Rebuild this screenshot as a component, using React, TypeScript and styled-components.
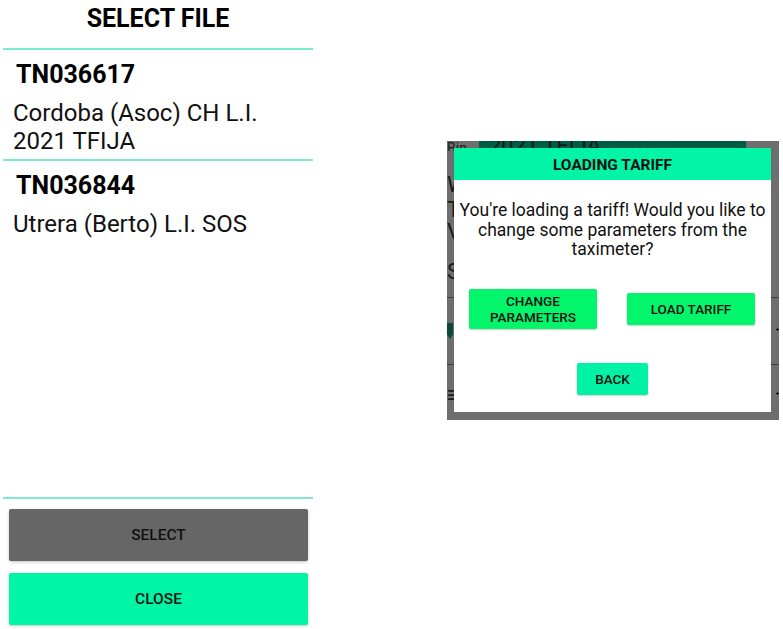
import styled, { createGlobalStyle } from "styled-components";

const GlobalStyle = createGlobalStyle`
  html, body {
    margin: 0;
    padding: 0;
    background: #ffffff;
    font-family: Roboto, "Liberation Sans", Arial, sans-serif;
  }
`;

interface TariffFile {
  code: string;
  name: string;
}

const files: TariffFile[] = [
  { code: "TN036617", name: "Cordoba (Asoc) CH L.I. 2021 TFIJA" },
  { code: "TN036844", name: "Utrera (Berto) L.I. SOS" },
];

const App = () => {
  return (
    <>
      <GlobalStyle />
      <Page>
        <FilePanel>
          <Title>SELECT FILE</Title>
          <Divider />
          <FileList>
            {files.map((file, i) => (
              <div key={file.code}>
                <FileItem>
                  <FileCode>{file.code}</FileCode>
                  <FileName>{file.name}</FileName>
                </FileItem>
                {i === 0 && <Divider />}
              </div>
            ))}
          </FileList>
          <Divider />
          <ActionBar>
            <WideButton $variant="grey">SELECT</WideButton>
            <WideButton $variant="green">CLOSE</WideButton>
          </ActionBar>
        </FilePanel>

        <PreviewArea>
          <Backdrop>
            <UnderScreen>
              <UnderTop>
                <UnderLabel>Bin</UnderLabel>
                <UnderBar>2021 TFIJA</UnderBar>
              </UnderTop>
              <UnderLetter $top={24}>W</UnderLetter>
              <UnderLetter $top={5}>T</UnderLetter>
              <UnderLetter $top={2}>V</UnderLetter>
              <UnderLetter $top={20}>S</UnderLetter>
              <UnderRow $height={66} $top={15}>
                <Chevron />
                <Dots />
              </UnderRow>
              <UnderRow $height={60} $top={0}>
                <Burger>≡</Burger>
                <Dots />
              </UnderRow>
            </UnderScreen>

            <Dialog>
              <DialogHeader>LOADING TARIFF</DialogHeader>
              <DialogText>
                You're loading a tariff! Would you like to change some
                parameters from the taximeter?
              </DialogText>
              <DialogButtons>
                <DialogButton $tall>
                  CHANGE
                  <br />
                  PARAMETERS
                </DialogButton>
                <DialogButton>LOAD TARIFF</DialogButton>
              </DialogButtons>
              <BackRow>
                <BackButton>BACK</BackButton>
              </BackRow>
            </Dialog>
          </Backdrop>
        </PreviewArea>
      </Page>
    </>
  );
};

export default App;

const Page = styled.div`
  display: flex;
  width: 783px;
  height: 629px;
  overflow: hidden;
`;

const FilePanel = styled.div`
  width: 316px;
  height: 629px;
  display: flex;
  flex-direction: column;
  padding: 0 3px;
  box-sizing: border-box;
`;

const Title = styled.div`
  height: 48px;
  line-height: 37px;
  text-align: center;
  font-size: 25px;
  font-weight: 700;
  color: #000;
`;

const Divider = styled.div`
  height: 2px;
  background: #7eeacf;
`;

const FileList = styled.div`
  flex: 1;
`;

const FileItem = styled.div`
  padding: 10px 0 4px 10px;
`;

const FileCode = styled.div`
  font-size: 25px;
  font-weight: 700;
  line-height: 30px;
  padding-left: 3px;
  margin-bottom: 9px;
  color: #000;
`;

const FileName = styled.div`
  font-size: 24px;
  line-height: 28px;
  color: #111;
  width: 270px;
`;

const ActionBar = styled.div`
  display: flex;
  flex-direction: column;
  gap: 12px;
  padding: 10px 5px 4px 6px;
`;

const WideButton = styled.div<{ $variant: "grey" | "green" }>`
  height: 52px;
  display: flex;
  align-items: center;
  justify-content: center;
  border-radius: 2px;
  font-size: 15.5px;
  font-weight: 500;
  color: #111;
  background: ${({ $variant }) => ($variant === "grey" ? "#666666" : "#00f5a6")};
  box-shadow: 0 1px 3px rgba(0, 0, 0, 0.25);
`;

const PreviewArea = styled.div`
  padding: 141px 0 0 131px;
`;

const Backdrop = styled.div`
  position: relative;
  width: 332px;
  height: 279px;
  background: #6e6e6e;
  overflow: hidden;
`;

const UnderScreen = styled.div`
  display: flex;
  flex-direction: column;
  color: #1a1a1a;
`;

const UnderTop = styled.div`
  display: flex;
  height: 10px;
  overflow: hidden;
  align-items: flex-end;
`;

const UnderLabel = styled.div`
  width: 32px;
  font-size: 14px;
  line-height: 14px;
  margin-bottom: -4px;
`;

const UnderBar = styled.div`
  width: 267px;
  height: 10px;
  background: #005c42;
  font-size: 22px;
  line-height: 10px;
  padding-left: 10px;
  box-sizing: border-box;
  color: #1a1a1a;
  overflow: hidden;
`;

const UnderLetter = styled.div<{ $top: number }>`
  font-size: 22px;
  line-height: 20px;
  margin-top: ${({ $top }) => $top}px;
`;

const UnderRow = styled.div<{ $height: number; $top: number }>`
  height: ${({ $height }) => $height}px;
  margin-top: ${({ $top }) => $top}px;
  border-top: 1px solid #3b3b3b;
  display: flex;
  align-items: center;
  justify-content: space-between;
`;

const Chevron = styled.div`
  width: 6px;
  height: 16px;
  background: #0b4a39;
  clip-path: polygon(0 0, 100% 0, 100% 70%, 50% 100%, 0 70%);
`;

const Burger = styled.div`
  font-size: 24px;
  color: #1a1a1a;
`;

const Dots = styled.div`
  width: 3px;
  height: 18px;
  background: radial-gradient(circle, #111 1.2px, transparent 1.4px) 0 0 / 3px 15px;
`;

const Dialog = styled.div`
  position: absolute;
  left: 7px;
  top: 7px;
  width: 317px;
  height: 264px;
  background: #ffffff;
  display: flex;
  flex-direction: column;
`;

const DialogHeader = styled.div`
  height: 32px;
  background: #02f5a6;
  display: flex;
  align-items: center;
  justify-content: center;
  padding-top: 1px;
  box-sizing: border-box;
  font-size: 15.5px;
  font-weight: 700;
  color: #111;
`;

const DialogText = styled.div`
  padding: 21px 2px 0;
  font-size: 17.5px;
  line-height: 19.5px;
  text-align: center;
  color: #111;
`;

const DialogButtons = styled.div`
  display: flex;
  align-items: center;
  justify-content: space-between;
  padding: 0 16px 0 15px;
  margin-top: 29px;
  height: 40px;
`;

const DialogButton = styled.div<{ $tall?: boolean }>`
  width: 128px;
  height: ${({ $tall }) => ($tall ? 40 : 32)}px;
  display: flex;
  align-items: center;
  justify-content: center;
  text-align: center;
  background: #03f56c;
  border-radius: 2px;
  font-size: 13.5px;
  font-weight: 500;
  line-height: 16px;
  color: #111;
  box-shadow: 0 1px 2px rgba(0, 0, 0, 0.2);
`;

const BackRow = styled.div`
  display: flex;
  justify-content: center;
  margin-top: 34px;
`;

const BackButton = styled.div`
  width: 71px;
  height: 32px;
  display: flex;
  align-items: center;
  justify-content: center;
  background: #00f2a4;
  border-radius: 2px;
  font-size: 13.5px;
  font-weight: 500;
  color: #111;
  box-shadow: 0 1px 2px rgba(0, 0, 0, 0.2);
`;
